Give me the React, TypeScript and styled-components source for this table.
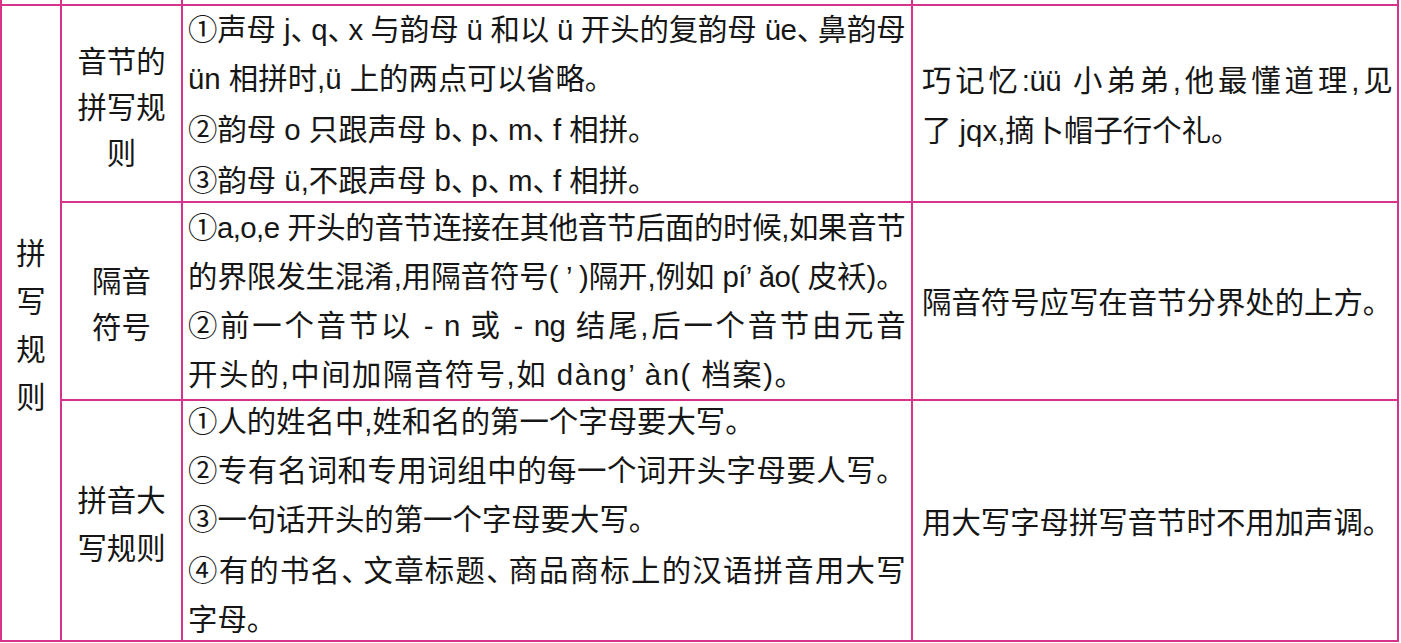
import React from "react";
import styled, { createGlobalStyle } from "styled-components";

const Global = createGlobalStyle`
  html, body { margin: 0; padding: 0; background: #ffffff; }
  body {
    font-family: "Liberation Sans", "Noto Sans CJK SC", sans-serif;
    color: #161616;
  }
`;

const PINK = "#d8338a";

const Table = styled.div`
  display: grid;
  grid-template-columns: 58px 119px 728px 484px;
  grid-template-rows: 4px 195px 196px 239px;
  gap: 2px;
  background: ${PINK};
  padding: 0 2px 2px 2px;
  width: max-content;
  font-size: 29.4px;
`;

const Stub = styled.div`
  background: #ffffff;
`;

const SideCell = styled.div`
  grid-column: 1;
  grid-row: 2 / span 3;
  background: #ffffff;
  display: flex;
  flex-direction: column;
  align-items: center;
  justify-content: center;
  line-height: 48px;
  padding-top: 6px;
`;

const TopicCell = styled.div<{ $lh: number; $row: number }>`
  grid-column: 2;
  grid-row: ${(p) => p.$row};
  background: #ffffff;
  display: flex;
  flex-direction: column;
  align-items: center;
  justify-content: center;
  text-align: center;
  line-height: ${(p) => p.$lh}px;
  padding-top: 8px;
  box-sizing: border-box;
`;

const RuleCell = styled.div`
  background: #ffffff;
  display: flex;
  flex-direction: column;
  justify-content: center;
  padding: 0 6px 0 5px;
  line-height: 49px;
`;

const NoteCell = styled.div`
  background: #ffffff;
  display: flex;
  flex-direction: column;
  justify-content: center;
  padding: 4px 5px 0 9px;
  line-height: 50px;
`;

const Line = styled.div<{ $justify?: boolean; $track?: number }>`
  white-space: nowrap;
  text-align: ${(p) => (p.$justify ? "justify" : "left")};
  text-align-last: ${(p) => (p.$justify ? "justify" : "left")};
  letter-spacing: ${(p) =>
    p.$justify ? "-0.6px" : `${p.$track ?? 0}px`};
`;

const Dun = styled.span`
  font-family: "Noto Sans CJK SC", sans-serif;
  letter-spacing: -9px;
`;

function renderText(t: string) {
  const parts = t.split("、");
  const out: React.ReactNode[] = [];
  parts.forEach((p, i) => {
    out.push(p);
    if (i < parts.length - 1) out.push(<Dun key={i}>、</Dun>);
  });
  return out;
}

type L = { t: string; j?: boolean; track?: number };
type Row = { topic: string[]; lh: number; rules: L[]; note: L[] };

const rows: Row[] = [
  {
    topic: ["音节的", "拼写规", "则"],
    lh: 46,
    rules: [
      { t: "①声母 j、q、x 与韵母 ü 和以 ü 开头的复韵母 üe、鼻韵母", j: true },
      { t: "ün 相拼时,ü 上的两点可以省略。" },
      { t: "②韵母 o 只跟声母 b、p、m、f 相拼。" },
      { t: "③韵母 ü,不跟声母 b、p、m、f 相拼。" },
    ],
    note: [
      { t: "巧记忆:üü 小弟弟,他最懂道理,见", j: true },
      { t: "了 jqx,摘卜帽子行个礼。" },
    ],
  },
  {
    topic: ["隔音", "符号"],
    lh: 46,
    rules: [
      { t: "①a,o,e 开头的音节连接在其他音节后面的时候,如果音节", j: true },
      { t: "的界限发生混淆,用隔音符号( ’ )隔开,例如 pí’ ǎo( 皮袄)。", j: true },
      { t: "②前一个音节以 - n 或 - ng 结尾,后一个音节由元音", j: true },
      { t: "开头的,中间加隔音符号,如 dàng’ àn( 档案)。", track: 1.5 },
    ],
    note: [{ t: "隔音符号应写在音节分界处的上方。" }],
  },
  {
    topic: ["拼音大", "写规则"],
    lh: 48,
    rules: [
      { t: "①人的姓名中,姓和名的第一个字母要大写。" },
      { t: "②专有名词和专用词组中的每一个词开头字母要人写。", j: true },
      { t: "③一句话开头的第一个字母要大写。" },
      { t: "④有的书名、文章标题、商品商标上的汉语拼音用大写", j: true },
      { t: "字母。" },
    ],
    note: [{ t: "用大写字母拼写音节时不用加声调。" }],
  },
];

export default function App() {
  return (
    <>
      <Global />
      <Table>
        <Stub />
        <Stub />
        <Stub />
        <Stub />
        <SideCell>
          {"拼写规则".split("").map((c) => (
            <Line key={c}>{c}</Line>
          ))}
        </SideCell>
        {rows.map((r, i) => (
          <React.Fragment key={i}>
            <TopicCell $lh={r.lh} $row={i + 2}>
              {r.topic.map((t) => (
                <Line key={t}>{t}</Line>
              ))}
            </TopicCell>
            <RuleCell>
              {r.rules.map((l, k) => (
                <Line key={k} $justify={l.j} $track={l.track}>
                  {renderText(l.t)}
                </Line>
              ))}
            </RuleCell>
            <NoteCell>
              {r.note.map((l, k) => (
                <Line key={k} $justify={l.j} $track={l.track}>
                  {renderText(l.t)}
                </Line>
              ))}
            </NoteCell>
          </React.Fragment>
        ))}
      </Table>
    </>
  );
}
